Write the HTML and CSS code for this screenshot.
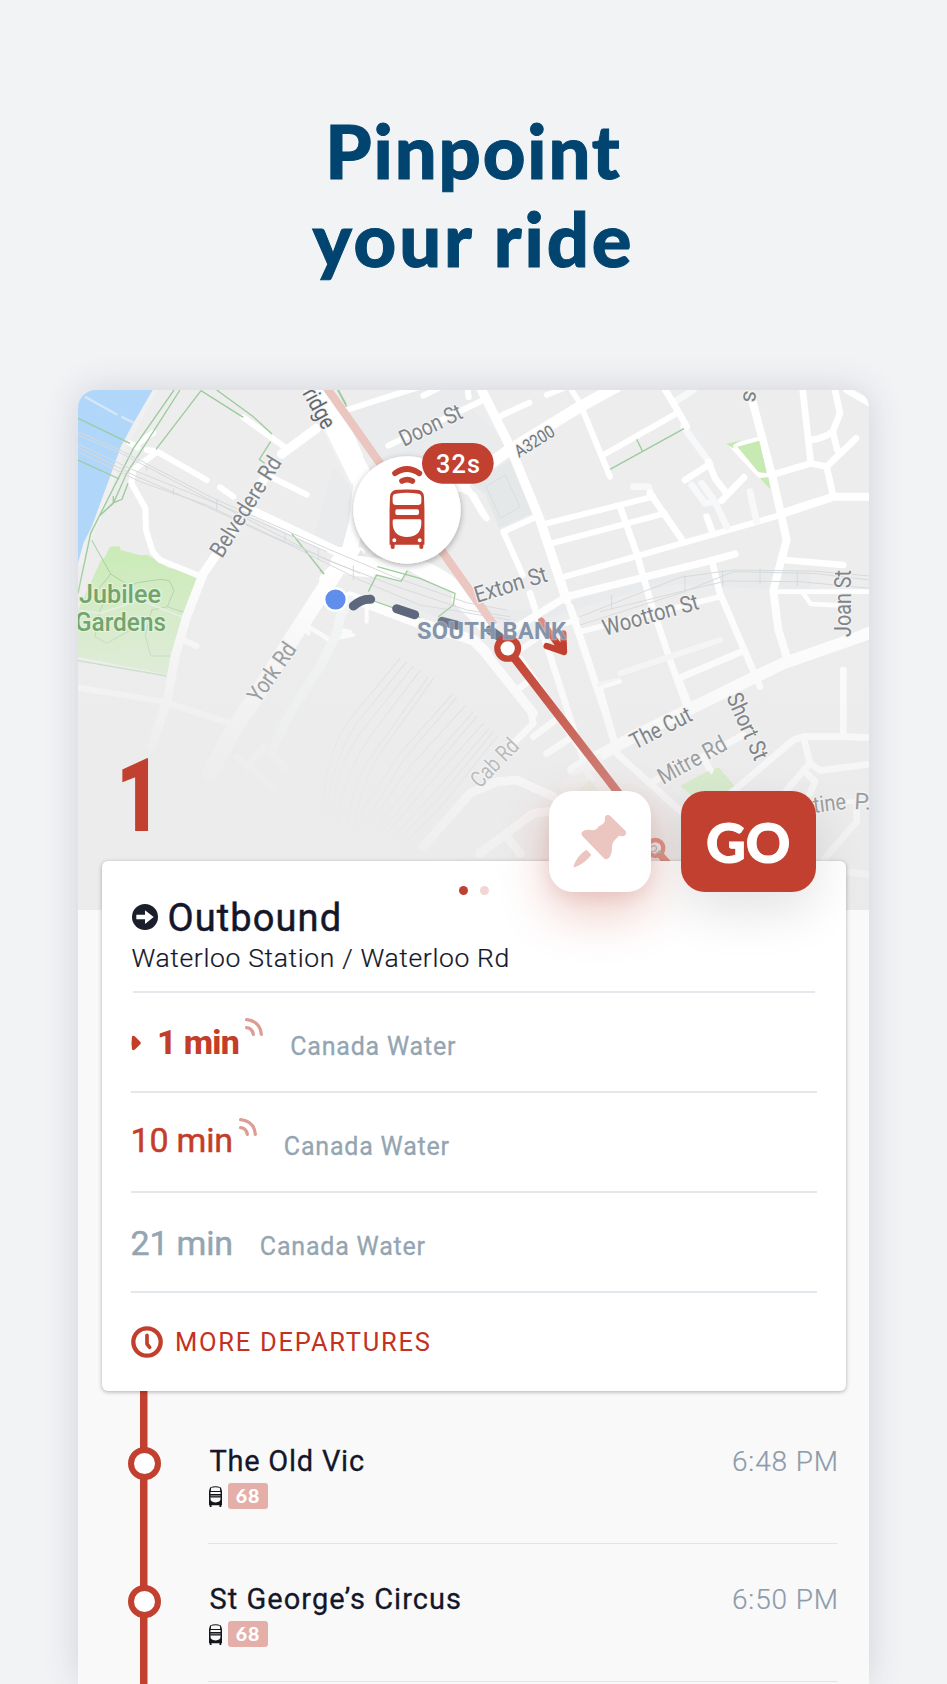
FILE: index.html
```html
<!DOCTYPE html>
<html lang="en">
<head>
<meta charset="utf-8">
<title>Pinpoint your ride</title>
<link rel="stylesheet" href="styles.css">
</head>
<body>
<svg width="0" height="0" class="defs">
  <symbol id="bus" viewBox="0 0 106 180">
    <path fill-rule="evenodd" d="M2 22Q3 2 24 1Q53 -2 82 1Q103 2 104 22L106 60V166H102V174Q102 179 96 179Q90 179 90 174V166H16V174Q16 179 10 179Q4 179 4 174V166H0V60ZM20 13Q10 14 10 24V38Q10 47 20 47H86Q96 47 96 38V24Q96 14 86 13Q53 8 20 13ZM23 60Q18 60 18 65V72Q18 77 23 77H83Q89 77 89 72V65Q89 60 83 60ZM14 90Q10 90 10 95V103Q12 142 53 143Q94 142 96 103V95Q96 90 92 90ZM15 147A6 6 0 1 0 15 159A6 6 0 1 0 15 147ZM91 147A6 6 0 1 0 91 159A6 6 0 1 0 91 147Z"/>
  </symbol>
  <symbol id="signal" viewBox="0 0 54 54">
    <path d="M5 5Q46 10 49 49M5 29Q22 31 25 49" fill="none" stroke="currentColor" stroke-width="10" stroke-linecap="round"/>
  </symbol>
  <symbol id="bus-small" viewBox="0 0 36 60" preserveAspectRatio="none">
    <path d="M3 4Q18 -2 33 4L36 14V55H34V60H29V55H7V60H2V55H0V14Z" fill="#14161c"/>
    <path d="M6 5Q18 2 30 5L31 14H5ZM4 17H32V23H4ZM4 33H32Q33 47 18 47Q3 47 4 33Z" fill="#f9f9f9"/>
    <path d="M4 28H32" stroke="#999" stroke-width="3"/>
  </symbol>
</svg>

<h1 class="headline"><span class="first-line">Pinpoint</span><span class="second-line">your ride</span></h1>

<main class="phone">
  <section class="map">
    <svg class="map-art" viewBox="78 390 791 520" width="791" height="520">
      <defs>
        <linearGradient id="down" x1="0" y1="0" x2="0" y2="1">
          <stop offset="0" stop-color="#ececec" stop-opacity="0"/>
          <stop offset="1" stop-color="#e9e9e9" stop-opacity=".75"/>
        </linearGradient>
        <radialGradient id="corner" gradientUnits="userSpaceOnUse" cx="150" cy="970" r="420">
          <stop offset="0" stop-color="#ececec"/>
          <stop offset=".4" stop-color="#ececec"/>
          <stop offset="1" stop-color="#ececec" stop-opacity="0"/>
        </radialGradient>
        <linearGradient id="route" gradientUnits="userSpaceOnUse" x1="563" y1="208" x2="900" y2="650">
          <stop offset="0" stop-color="#c24030"/>
          <stop offset="1" stop-color="#d08880"/>
        </linearGradient>
        <linearGradient id="arrow" x1="0" y1="0" x2="0" y2="1">
          <stop offset=".1" stop-color="#dd8c82"/>
          <stop offset=".7" stop-color="#c1402f"/>
        </linearGradient>
        <filter id="soft" x="-30%" y="-30%" width="160%" height="160%">
          <feDropShadow dx="0" dy="6" stdDeviation="9" flood-color="#000" flood-opacity=".32"/>
        </filter>
      </defs>
      <rect x="78" y="390" width="791" height="520" fill="#ededed"/>

      <!-- riverside and gardens -->
      <g transform="translate(60 380) scale(.33333)">
        <path d="M290 20L228 134L190 206L158 294L103 444L78 494L60 556" fill="none" stroke="#f0f0f0" stroke-width="14"/>
        <path class="water" d="M54 30H278L220 130L182 200L150 290L95 440L70 490L54 550Z"/>
        <path class="park" d="M150 500L178 498L182 510L240 526L262 524L325 564L352 568L415 598L322 884L54 830V690L105 580L120 545L135 530Z"/>
        <g class="parkpath">
          <path d="M95 480L152 582L105 640M152 582L210 618L232 608L300 598L328 602L342 632L322 680L375 698M322 680L275 690L256 765L272 828H340M160 620L120 690L105 770L140 790L215 748L185 700"/>
        </g>
        <path d="M54 690L120 700L240 660L388 720" class="thin"/>
        <path d="M75 50L172 104M184 110L220 128" stroke="#d7e7f5" stroke-width="7"/>
      </g>

      <!-- darker blocks beside the bridge -->
      <g transform="translate(320 380) scale(.33333)">
        <path d="M80 90L290 30H480L498 60L440 70L560 190L420 320L160 230Z" fill="#e9ebed"/>
        <path d="M40 260L98 330V470Q90 500 40 510L-20 480Z" fill="#e9ebed"/>
        <path d="M450 310L570 240L636 400L538 445L495 340Z" fill="#e5e8e9"/>
        <path d="M498 320L555 285L600 380L542 415Z" fill="none" stroke="#dadddd" stroke-width="3"/>
        <path d="M0 480C260 640 420 680 560 690S900 610 1080 572H1470V635L1080 612Q900 640 700 710L420 740L200 650Z" fill="#e6e8ea" opacity=".55"/>
      </g>

      <!-- west roads -->
      <g class="road" transform="translate(60 380) scale(.33333)">
        <path stroke-width="18" d="M240 186L280 158M210 190L232 202M260 210L290 214L440 300M285 220L220 270L214 310L256 385L258 450L278 515L300 540L425 590M480 322L520 350M630 290L740 344M550 112L672 200"/>
        <path stroke-width="28" d="M560 385L830 514L900 516M665 222L770 145"/>
        <path stroke-width="27" d="M640 250L520 450L430 580L380 710L345 830L322 960L275 1100"/>
        <path stroke-width="18" d="M370 780L410 798M60 924L310 965L540 1040"/>
        <path stroke-width="48" d="M830 570L700 770L600 930L520 1050L450 1180"/>
        <path stroke-width="14" d="M745 740L810 780L870 760M720 710L745 760"/>
        <path stroke-width="20" d="M530 1130L650 1230M612 1100L560 1160" opacity=".7"/>
      </g>
      <path d="M304 390L334 390L363 455L352 485Z" fill="#fff"/>
      <g class="road" transform="translate(320 380) scale(.33333)">
        <path stroke-width="62" d="M-20 10L125 290"/>
        <path stroke-width="46" d="M125 290L110 430L80 540L20 600"/>
        <path stroke-width="60" d="M60 550Q180 570 290 570Q370 580 500 730"/>
        <path stroke-width="32" d="M90 650L300 730L460 780L500 820"/>
        <path stroke-width="18" d="M80 90L300 20M310 47L360 22M442 20L446 52M205 197L490 60M425 325L460 345L500 415L490 405L440 320M550 455L650 410M550 455L608 585M537 110L628 68"/>
        <path stroke-width="28" d="M480 20L570 200L660 420L740 660"/>
        <path stroke-width="34" d="M415 320L560 215L780 80L890 20"/>
        <path stroke-width="18" d="M790 95L870 290M850 225L1070 100M680 430L1000 350M695 490L1035 400M735 590L1400 400L1550 350H1650"/>
        <path stroke-width="22" d="M560 760L740 650L1180 540L1245 522M750 680L860 1010L890 1110"/>
        <path stroke-width="17" d="M780 755L1200 650M600 810L700 740L770 720M755 30L780 70M680 45L730 25" opacity=".9"/>
      </g>
      <path d="M320 420L350 482M313 408L352 490" stroke="#f1f2f3" stroke-width="1"/>
      <path d="M375 574L401 581L408 570L420 577L453 593L450 605L436 610L368 590Z" fill="#ececec"/>
      <path d="M357 556L361 550L365 556Z" fill="#e3e5e7"/>
      <g transform="translate(60 380) scale(.33333)">
        <path class="green" d="M342 30L220 205L92 460L54 640M360 30L200 280L160 370L118 408M423 32L288 208M423 32L550 112M470 30L580 110L636 162M632 185L598 238L614 250M54 115L210 190M54 240L178 297M204 310L186 358L160 368V348M160 368L118 408M695 460L792 582M833 30L860 80M54 842L320 888"/>
      </g>

      <!-- east roads -->
      <g class="road" transform="translate(600 380) scale(.33333)">
        <g stroke="#f6f8f9" stroke-width="20">
          <path d="M225 65L280 30M250 140L330 250M275 315L315 370L345 365L305 310M345 365L380 440M450 335L470 425M100 320H145L155 350"/>
        </g>
        <path stroke-width="20" d="M190 20L235 95L260 140M325 245L345 295L380 340M255 300L325 255M365 362L432 292M60 380L110 520L150 660L210 840L260 980M150 340L250 485L245 480M320 410L335 450M335 540L360 640L480 920M607 20L632 245M632 180Q670 175 698 155L720 100L705 30M698 155L712 210M768 175L680 260M515 285L632 250L680 260L700 350M552 540L730 555"/>
        <path stroke-width="24" d="M455 55L520 300L560 480L520 630L535 750L560 830M545 400L700 350H810"/>
        <path stroke-width="18" d="M475 180L400 200L480 285L510 280"/>
        <path stroke-width="14" d="M520 635H810M610 640L632 672L720 676L730 740"/>
        <path stroke-width="20" d="M740 30L810 70"/>
      </g>
      <g transform="translate(600 380) scale(.33333)">
        <path class="leaf" d="M412 200L478 182L500 280L475 276ZM378 192L425 180L400 195V205ZM480 295L505 292L511 328Z"/>
        <path class="green" d="M30 268L252 146M110 178L128 215"/>
        <path d="M-60 735L80 690L240 640L400 575L640 580L810 600M-60 710L240 592L400 570L640 573L810 588M0 695L250 633L380 603L600 605L810 625M35 645V690M255 585V640M368 570V620M480 565V612M592 575V618M720 580V620" class="rail"/>
      </g>

      <!-- south-east roads -->
      <g transform="translate(600 640) scale(.33333)">
        <g class="road">
          <path stroke="#f5f7f8" stroke-width="18" d="M0 135L55 122M60 100L360 0"/>
          <path stroke-width="36" d="M-80 390L100 290L550 70L780 -10L830 -30"/>
          <path stroke-width="20" d="M0 150L45 310M-210 -140L-30 420M235 115L425 35M235 115L265 190M290 360L430 285M310 350L335 400M730 90V290L810 293M380 470L580 300L610 290H735M610 290L630 370L660 392L810 372M630 370L560 450M620 400L645 425L630 460"/>
          <path stroke-width="20" d="M50 340L260 530M150 430L185 410M770 500V545L670 660M740 695L810 705"/>
          <path stroke-width="14" d="M730 485H800"/>
        </g>
        <path class="leaf" d="M240 437L325 393L335 404L345 384H358L404 438L350 470H280Z"/>
      </g>

      <!-- station side -->
      <g transform="translate(320 580) scale(.33333)">
        <g class="road">
          <path stroke-width="28" d="M480 200L640 400"/>
          <path stroke-width="20" d="M630 390L640 430L580 490M590 330L625 305M640 470L720 410M680 520L750 475"/>
          <path stroke-width="24" d="M600 240L820 560"/>
          <path stroke-width="26" d="M450 640L530 605L590 600L700 650M450 640L310 800M480 820L640 700L720 690M560 770L600 820"/>
          <path stroke-width="12" d="M140 90V125M0 160L25 178L100 165M60 150L90 155M845 322L900 305"/>
          <path stroke="#f3f6f7" stroke-width="28" d="M90 60L60 110L50 160L0 260L-90 400L-150 520L-110 560"/>
        </g>
        <g class="tracks">
          <path d="M240 235L80 430Q20 520 10 680M260 245L110 430Q40 530 20 700M280 258L120 460Q50 560 30 720M300 272L150 470Q70 590 50 730M325 290L160 520Q100 600 80 740M340 295L180 520Q120 620 100 750M395 345L240 520L120 700M410 352L250 540L140 720M435 378L270 560L150 730M460 395L290 590L170 740M472 408L300 610L190 750M490 430L320 620L210 750M508 445L340 640L230 760M520 455L360 650L250 765M532 468L380 660L270 775"/>
        </g>
        <path d="M760 650L810 597L840 640Z" fill="#cfe4c0"/>
        <path d="M720 620Q760 560 840 520L900 640H720Z" fill="#f4f4f4" opacity=".6"/>
      </g>

      <!-- railway across the west -->
      <g transform="translate(60 380) scale(.33333)">
        <path class="rail" d="M54 155L180 210L460 355L800 505L1000 590L1220 668L1340 690M54 165L180 218L460 365L800 515M54 192L220 270L480 375L800 540L1010 620L1220 690L1350 710M54 202L220 285L440 380L700 500L900 600L1080 675L1350 720M54 215L240 305L440 375L640 470L900 580M260 258V272M470 358V390M675 460V485M775 508V540M880 556V600M340 325V345"/>
      </g>
      <g transform="translate(320 380) scale(.33333)">
        <path class="green" d="M172 560L300 595L405 640L400 675L355 710M145 635L170 585L243 604L262 572M140 655L300 712M55 30L78 72M0 570L12 582"/>
      </g>

      <path d="M324 384L494 625" stroke="#ebc5bf" stroke-width="8.300"/>
      <rect x="78" y="560" width="791" height="350" fill="url(#down)"/>
      <rect x="78" y="390" width="791" height="520" fill="url(#corner)"/>

      <!-- walking leg, stop and onward route -->
      <path transform="translate(320 380) scale(.33333)" fill="none" stroke-linecap="round" d="M100 678Q125 656 152 658M230 686L284 704" stroke="#5d687c" stroke-width="27"/>
      <path transform="translate(320 380) scale(.33333)" fill="none" stroke-linecap="round" d="M366 724L412 736M510 750L540 772" stroke="#6b768a" stroke-width="27"/>
      <g transform="translate(320 580) scale(.33333)">
        <path d="M580 230L900 645" stroke="url(#route)" stroke-width="25"/>
        <circle cx="563" cy="205" r="31" fill="#fff" stroke="#c24535" stroke-width="19"/>
        <path d="M664 122L722 205M680 198L732 216L730 160" fill="none" stroke="url(#arrow)" stroke-width="19" stroke-linecap="round" stroke-linejoin="round"/>
        <circle cx="1006" cy="804" r="24" fill="#ededed" stroke="#dc968d" stroke-width="13"/>
        <path d="M1022 826L1065 875" stroke="#dc968d" stroke-width="22"/>
      </g>

      <g class="labels">
        <text transform="translate(222 559) rotate(-58)" textLength="114" lengthAdjust="spacingAndGlyphs">Belvedere Rd</text>
        <text class="dark" transform="translate(302 393) rotate(61)" textLength="43" lengthAdjust="spacingAndGlyphs">ridge</text>
        <text transform="translate(404 447) rotate(-26)" textLength="67" lengthAdjust="spacingAndGlyphs">Doon St</text>
        <text class="small" transform="translate(519 458) rotate(-32)" textLength="44" lengthAdjust="spacingAndGlyphs">A3200</text>
        <text transform="translate(477 603) rotate(-17)" textLength="75" lengthAdjust="spacingAndGlyphs">Exton St</text>
        <text transform="translate(605 636) rotate(-16)" textLength="99" lengthAdjust="spacingAndGlyphs">Wootton St</text>
        <text transform="translate(744 390) rotate(95)">s</text>
        <text transform="translate(851 637) rotate(-90)" textLength="67" lengthAdjust="spacingAndGlyphs">Joan St</text>
        <text transform="translate(635 750) rotate(-27)" textLength="66" lengthAdjust="spacingAndGlyphs">The Cut</text>
        <text class="mid" transform="translate(663 785) rotate(-29)" textLength="75" lengthAdjust="spacingAndGlyphs">Mitre Rd</text>
        <text transform="translate(726 697) rotate(66)" textLength="71" lengthAdjust="spacingAndGlyphs">Short St</text>
        <text class="mid" transform="translate(814 813) rotate(-7)" textLength="33" lengthAdjust="spacingAndGlyphs">tine</text>
        <text class="mid" transform="translate(854 809) rotate(3)">P.</text>
        <text class="mid" transform="translate(259 704) rotate(-55)" textLength="67" lengthAdjust="spacingAndGlyphs">York Rd</text>
        <text class="pale" transform="translate(480 789) rotate(-46)" textLength="58" lengthAdjust="spacingAndGlyphs">Cab Rd</text>
        <text class="pale tiny" transform="translate(648 848) rotate(50)">or</text>
        <text class="garden" x="79" y="603" textLength="82" lengthAdjust="spacingAndGlyphs">Jubilee</text>
        <text class="garden" x="75" y="631" textLength="91" lengthAdjust="spacingAndGlyphs">Gardens</text>
        <text class="district" x="417" y="639" textLength="149" lengthAdjust="spacing">SOUTH BANK</text>
      </g>

      <circle cx="335.5" cy="599.5" r="11.3" fill="#608eec" stroke="#fff" stroke-width="2.4"/>
      <g transform="translate(320 380) scale(.33333)">
        <circle cx="261" cy="390" r="161" fill="#fff" filter="url(#soft)"/>
        <path d="M225 280Q260 254 298 280M246 303Q262 295 277 303" fill="none" stroke="#c2402f" stroke-width="17" stroke-linecap="round"/>
        <use href="#bus" x="208" y="328" width="106" height="180" fill="#c2402f"/>
        <rect x="306" y="189" width="215" height="122" rx="61" fill="#c1402f"/>
        <text x="348" y="278" class="eta" textLength="132">32s</text>
      </g>
    </svg>
    <div class="line-number">1</div>
  </section>

  <section class="card">
    <div class="pager"><i class="dot on"></i><i class="dot"></i></div>
    <header class="direction">
      <div class="direction-name">
        <svg width="26" height="26" viewBox="0 0 78 78"><circle cx="39" cy="39" r="39" fill="#1b1e2b"/><path d="M13 32H39V19L65 39L39 60V46H13Z" fill="#fff"/></svg>
        <span>Outbound</span>
      </div>
      <div class="stop-name"><span>Waterloo Station / Waterloo Rd</span></div>
    </header>
    <div class="departure first">
      <svg class="caret" width="10" height="16" viewBox="0 0 10 16"><path d="M1 1.500Q2.500 0 4.500 2L9.500 7Q10 8 9.500 9L4.500 14Q2.500 16 1 14.500Q0 8 1 1.500Z" fill="#c43d29"/></svg>
      <span class="time">1 min</span>
      <svg class="signal" width="18" height="18"><use href="#signal"/></svg>
      <span class="dest">Canada Water</span>
    </div>
    <div class="departure second">
      <span class="time">10 min</span>
      <svg class="signal" width="18" height="18"><use href="#signal"/></svg>
      <span class="dest">Canada Water</span>
    </div>
    <div class="departure third">
      <span class="time">21 min</span>
      <span class="dest">Canada Water</span>
    </div>
    <div class="more">
      <svg width="32" height="32" viewBox="0 0 96 96" fill="none" stroke="#c33f2d"><circle cx="48" cy="48" r="41" stroke-width="13"/><path d="M48 28V54L56 64" stroke-width="11" stroke-linecap="round" stroke-linejoin="round"/></svg>
      <span>MORE DEPARTURES</span>
    </div>
    <div class="actions">
      <button class="pin" aria-label="Pin">
        <svg width="54" height="54" viewBox="0 0 162 162" fill="#ebc5bf"><path d="M96 12Q94 5 100 1Q106 -2 112 3L157 47Q162 53 157 60Q151 66 142 62Q136 62 132 69Q116 80 117 100Q116 121 107 130Q99 136 92 129L28 63Q22 55 30 49Q40 42 62 46Q72 44 78 34Q98 24 96 12ZM40 104L55 119Q36 145 5 157Q0 158 2 152Q12 122 40 104Z"/></svg>
      </button>
      <button class="go">GO</button>
    </div>
  </section>

  <ul class="stops">
    <li class="stop">
      <i class="node"></i>
      <div class="stop-row"><span class="name vic">The Old Vic</span><span class="clock">6:48 PM</span></div>
      <div class="lines"><svg width="13" height="21"><use href="#bus-small"/></svg><b class="badge">68</b></div>
    </li>
    <li class="stop">
      <i class="node"></i>
      <div class="stop-row"><span class="name circus">St George’s Circus</span><span class="clock">6:50 PM</span></div>
      <div class="lines"><svg width="13" height="21"><use href="#bus-small"/></svg><b class="badge">68</b></div>
    </li>
  </ul>
</main>
</body>
</html>
```
FILE: styles.css
```css
* { box-sizing: border-box; }
html, body { margin: 0; }
body {
  width: 947px;
  height: 1684px;
  overflow: hidden;
  background: #f1f3f5;
  font-family: Roboto, "Liberation Sans", sans-serif;
  color: #14172a;
  display: flex;
  flex-direction: column;
}
.defs { position: absolute; }
.headline {
  margin: 0;
  height: 390px;
  padding-top: 107px;
  text-align: center;
  font: 900 74px/87.5px Lato, sans-serif;
  color: #00446f;
  -webkit-text-stroke: 1px #00446f;
}
.headline span { display: block; }
.first-line { letter-spacing: 1.900px; }
.second-line { letter-spacing: 2.900px; }
.phone {
  width: 791px;
  height: 1294px;
  margin-left: 78px;
  border-radius: 18px 18px 0 0;
  background: #f9f9f9;
  box-shadow: 0 0 36px rgba(50, 50, 85, .16);
}

/* map */
.map {
  position: relative;
  height: 520px;
  border-radius: 18px 18px 0 0;
  overflow: hidden;
}
.map-art { display: block; }
.water { fill: #b0d6fa; }
.park { fill: #cbebb8; }
.leaf { fill: #c7eab2; }
.parkpath { fill: none; stroke: #a3cca0; stroke-width: 3; }
.green { fill: none; stroke: #9ccb9c; stroke-width: 4; }
.thin { fill: none; stroke: #e4eee0; stroke-width: 5; }
.road { fill: none; stroke: #fff; stroke-linecap: round; stroke-linejoin: round; }
.rail { fill: none; stroke: #d6d9db; stroke-width: 3; }
.tracks { fill: none; stroke: #dcdfdf; stroke-width: 3.5; }
.labels text {
  font-family: Roboto, sans-serif;
  font-size: 23px;
  fill: #7f8489;
  stroke: #f3f3f3;
  stroke-width: 2.500px;
  stroke-linejoin: round;
  paint-order: stroke;
}
.labels .dark { fill: #60676e; }
.labels .mid { fill: #9b9ea0; }
.labels .pale { fill: #b9bcbc; }
.labels .small { font-size: 17.500px; fill: #70767c; }
.labels .tiny { font-size: 14px; stroke: none; }
.labels .garden { font-size: 25px; fill: #72a56d; stroke: #e4f2dc; font-weight: 500; }
.labels .district { font-size: 23.500px; font-weight: 700; fill: #8594ab; stroke: #eef0f3; stroke-opacity: .4; }
.eta { font: 500 76px Roboto, sans-serif; fill: #fff; }
.line-number {
  position: absolute;
  left: 38px;
  top: 346px;
  font: 900 102px/120px Roboto, sans-serif;
  color: #c1402f;
  transform: scaleX(.77);
  transform-origin: 0 0;
}

/* departures card */
.card {
  position: relative;
  width: 744px;
  height: 530px;
  margin: -49px 0 0 24px;
  padding: 0 29px 0 28.500px;
  background: #fff;
  border-radius: 6px;
  box-shadow: 0 1px 4px rgba(0, 0, 0, .3);
}
.pager { display: flex; gap: 12.500px; padding: 24.500px 0 0 328px; }
.dot { width: 9px; height: 9px; border-radius: 50%; background: #f1d6d3; }
.dot.on { background: #c1402f; }
.direction {
  height: 98px;
  margin: 0 2px;
  border-bottom: 2px solid #e6e8ed;
}
.direction-name {
  display: flex;
  align-items: center;
  gap: 10px;
  height: 45px;
  padding-top: 1px;
  font-size: 38px;
  line-height: 44px;
  letter-spacing: 1.100px;
  -webkit-text-stroke: .5px #14172a;
}
.direction-name svg { margin: -2px 0 0 -1px; }
.stop-name {
  margin-left: -1px;
  font-size: 26.500px;
  line-height: 35px;
  letter-spacing: .65px;
  -webkit-text-stroke: .2px #14172a;
}
.stop-name span { font-weight: 300; }
.departure {
  display: flex;
  align-items: baseline;
  height: 100px;
  border-bottom: 2px solid #e3e8ec;
}
.time { font-size: 34px; line-height: 100px; color: #c43d29; white-space: nowrap; -webkit-text-stroke: .5px currentColor; }
.dest { font-size: 25px; line-height: 40px; letter-spacing: .8px; color: #94a5b2; -webkit-text-stroke: .3px currentColor; }
.second .time, .third .time { letter-spacing: -.2px; }
.first .time { font-weight: 800; position: relative; top: -1px; letter-spacing: -.7px; -webkit-text-stroke: 0; }
.second .time { position: relative; top: -3px; }
.caret { margin: 2px 16.500px 0 0; align-self: center; }
.signal { color: #de9d94; align-self: flex-start; margin: 25px 27px 0 6px; }
.third .time { color: #94a5b2; }
.third .dest { margin-left: 27px; }
.more {
  display: flex;
  align-items: center;
  gap: 12.500px;
  height: 99px;
  font-size: 25.500px;
  letter-spacing: 1.750px;
  color: #c33220;
}
.actions {
  position: absolute;
  top: -70px;
  right: 30.300px;
  display: flex;
  align-items: flex-start;
  gap: 30px;
}
.actions button { border: 0; padding: 0; height: 101px; border-radius: 24px; }
.pin {
  width: 102px;
  background: #fff;
  display: grid;
  place-items: center;
  box-shadow: 0 20px 50px rgba(190, 60, 40, .28), 0 6px 16px rgba(150, 60, 40, .1);
}
.go {
  width: 135px;
  background: #c1402f;
  color: #fff;
  font: 900 55px/96px Lato, sans-serif;
  -webkit-text-stroke: 1px #fff;
  box-shadow: 0 20px 50px rgba(0, 0, 0, .11);
}

/* stop list */
.stops {
  list-style: none;
  margin: 0;
  padding: 15px 31px 0 130px;
  height: 293px;
  overflow: hidden;
  background: linear-gradient(#c1402f, #c1402f) 62px 0 / 7.500px 100% no-repeat;
}
.stop { position: relative; height: 138px; padding-top: 37px; border-bottom: 1.500px solid #e2e4e5; }
.node {
  position: absolute;
  left: -80.500px;
  top: 40.500px;
  width: 33px;
  height: 33px;
  border: 6px solid #c1402f;
  border-radius: 50%;
  background: #fff;
}
.stop-row { display: flex; justify-content: space-between; align-items: baseline; height: 38px; padding-left: 1.500px; line-height: 36px; }
.name { font-size: 29px; letter-spacing: .75px; -webkit-text-stroke: .3px #14172a; }
.name.circus { letter-spacing: 1.050px; }
.clock { font-size: 28px; font-weight: 300; letter-spacing: .9px; margin-right: -1px; color: #8d9cab; -webkit-text-stroke: .2px currentColor; }
.lines { display: flex; align-items: center; gap: 6.500px; margin-top: 2px; height: 26px; padding-left: .5px; }
.badge {
  width: 40px;
  height: 26px;
  border-radius: 3px;
  background: #e4afa9;
  color: #fff;
  font: 900 19.500px/26px Lato, sans-serif;
  letter-spacing: 1px;
  text-align: center;
}
```
